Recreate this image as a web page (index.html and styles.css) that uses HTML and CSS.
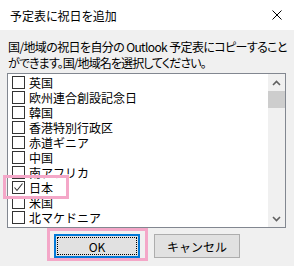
FILE: index.html
```html
<!DOCTYPE html>
<html lang="ja">
<head>
  <meta charset="UTF-8" />
  <title>予定表に祝日を追加</title>
  <link rel="stylesheet" href="styles.css">
</head>
<body>

<div class="window">
  <div class="titlebar">
    <span class="title">予定表に祝日を追加</span>
    <svg class="close" width="10" height="10" viewBox="0 0 10 10">
      <path d="M0.5 0.5 L9.5 9.5 M9.5 0.5 L0.5 9.5" stroke="#000" stroke-width="1" fill="none" />
    </svg>
  </div>

  <div class="content">
    <p class="desc">国/地域の祝日を自分の Outlook 予定表にコピーすること<br><span class="tight">ができます。国/地域名を選択してください。</span></p>

    <div class="listbox">
      <ul class="items">
        <li><span class="check"></span>英国</li>
        <li><span class="check"></span>欧州連合創設記念日</li>
        <li><span class="check"></span>韓国</li>
        <li><span class="check"></span>香港特別行政区</li>
        <li><span class="check"></span>赤道ギニア</li>
        <li><span class="check"></span>中国</li>
        <li><span class="check"></span>南アフリカ</li>
        <li><span class="check checked">
          <svg width="11" height="11" viewBox="0 0 11 11">
            <path d="M1.5 5.5 L4 8.5 L9.5 1.5" stroke="#333" stroke-width="1.1" fill="none" />
          </svg>
        </span>日本</li>
        <li><span class="check"></span>米国</li>
        <li><span class="check"></span>北マケドニア</li>
      </ul>
      <div class="scrollbar">
        <div class="arrow">
          <svg width="9" height="6" viewBox="0 0 9 6"><path d="M1 5 L4.5 1.5 L8 5" stroke="#606060" stroke-width="1.6" fill="none" /></svg>
        </div>
        <div class="thumb"></div>
        <div class="track"></div>
        <div class="arrow">
          <svg width="9" height="6" viewBox="0 0 9 6"><path d="M1 1 L4.5 4.5 L8 1" stroke="#606060" stroke-width="1.6" fill="none" /></svg>
        </div>
      </div>
    </div>

    <div class="buttons">
      <button class="btn default"><span class="focus">OK</span></button>
      <button class="btn">キャンセル</button>
    </div>
  </div>

  <div class="mark mark-item"></div>
  <div class="mark mark-ok"></div>
</div>

</body>
</html>
```

FILE: styles.css
```css
body {
  margin: 0;
  font-family: "Noto Sans CJK JP", "Noto Sans", sans-serif;
  font-size: 12px;
  color: #000;
}
.window {
  position: relative;
  width: 294px;
  height: 266px;
  background: #f0f0f0;
  overflow: hidden;
}
.titlebar {
  height: 30px;
  background: #fff;
  display: flex;
  align-items: center;
  justify-content: space-between;
  padding: 0 12px 0 10px;
}
.title {
  font-feature-settings: "palt";
}
.content {
  padding: 9px 0 0 0;
}
.desc {
  margin: 0 0 0 8px;
  line-height: 16px;
  white-space: nowrap;
  letter-spacing: -0.62px;
  font-feature-settings: "palt";
}
.desc .tight {
  letter-spacing: -0.9px;
}
.listbox {
  margin: 2px 0 0 7px;
  width: 279px;
  height: 155px;
  box-sizing: border-box;
  border: 1px solid #828790;
  background: #fff;
  display: flex;
}
.items {
  flex: 1;
  list-style: none;
  margin: 0;
  padding: 1px 0 0 0;
  overflow: hidden;
}
.items li {
  height: 15px;
  display: flex;
  align-items: center;
  gap: 4px;
  padding-left: 4px;
  line-height: 15px;
  white-space: nowrap;
}
.check {
  width: 13px;
  height: 13px;
  box-sizing: border-box;
  border: 1px solid #333;
  background: #fff;
  display: flex;
  align-items: center;
  justify-content: center;
}
.scrollbar {
  width: 17px;
  background: #f0f0f0;
  display: flex;
  flex-direction: column;
}
.arrow {
  height: 17px;
  display: flex;
  align-items: center;
  justify-content: center;
}
.thumb {
  height: 17px;
  background: #cdcdcd;
}
.track {
  flex: 1;
}
.buttons {
  display: flex;
  justify-content: center;
  gap: 14px;
  margin-top: 6px;
}
.btn {
  width: 86px;
  height: 24px;
  box-sizing: border-box;
  padding: 0;
  font-family: inherit;
  font-size: 12px;
  color: #000;
  background: #e1e1e1;
  border: 1px solid #adadad;
  display: flex;
  align-items: center;
  justify-content: center;
}
.btn.default {
  border: 2px solid #0078d7;
  padding: 1px;
  align-items: stretch;
}
.focus {
  flex: 1;
  border: 1px dotted #000;
  display: flex;
  align-items: center;
  justify-content: center;
}
.mark {
  position: absolute;
  box-sizing: border-box;
  border: 3px solid #f4a7c8;
}
.mark-item {
  left: 3px;
  top: 175px;
  width: 66px;
  height: 24px;
}
.mark-ok {
  left: 47px;
  top: 228px;
  width: 101px;
  height: 33px;
}
```
